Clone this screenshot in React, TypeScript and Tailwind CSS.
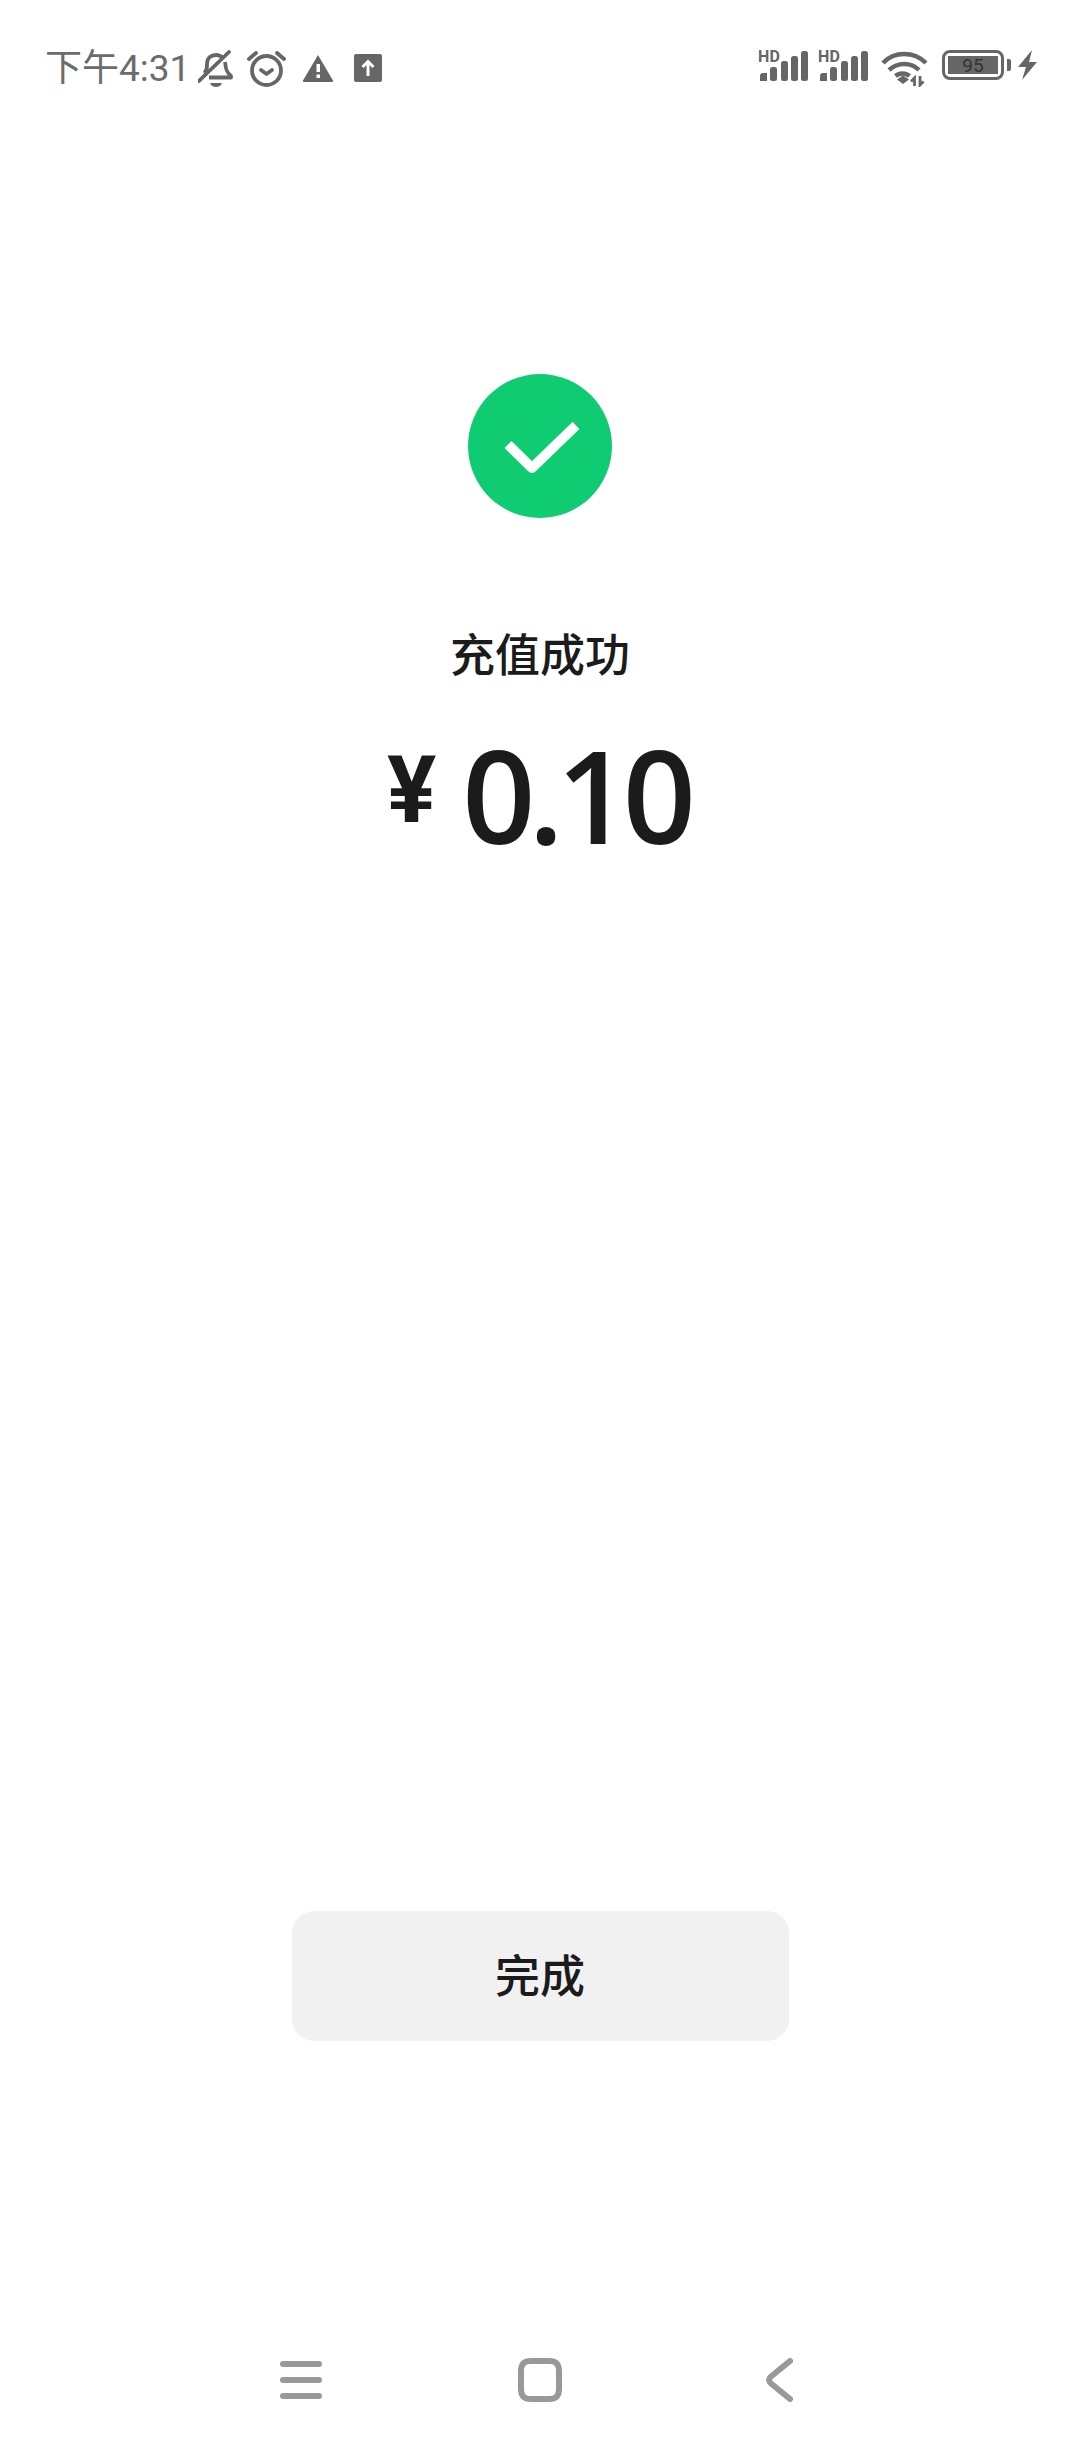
const cjk = "font-['Roboto','Noto_Sans_CJK_SC',sans-serif]";

function Signal() {
  return (
    <svg className="overflow-visible" width="50" height="32" viewBox="0 0 50 32" fill="#666">
      <text x="0" y="11.500" fontFamily="Roboto, sans-serif" fontWeight="700" fontSize="16" letterSpacing="0.2">HD</text>
      <path d="M2 31v-5a3 3 0 0 1 3-3h4v8z" />
      <rect x="12" y="17" width="7" height="14" rx="2.500" />
      <rect x="23" y="11" width="7" height="20" rx="2.500" />
      <rect x="33" y="6" width="7" height="25" rx="2.500" />
      <rect x="43" y="1" width="7" height="30" rx="2.500" />
    </svg>
  );
}

function StatusBar() {
  return (
    <div className="flex h-[100px] items-start justify-between pl-[45px] pr-[43px] pt-[50px] text-[#666]">
      <div className="flex items-start">
        <span className={`${cjk} -mt-[1px] w-[153px] text-[37px] leading-[40px] text-[#6b6b6b]`}>下午4:31</span>
        {/* bell with slash */}
        <svg width="35" height="37" viewBox="0 0 35 37" fill="none" stroke="#666" strokeWidth="3.800">
          <path d="M6 23c3-2 3-5 3-9 0-6 4-9 9-9 3 0 5 1 7 3M27 12c1 5 0 9 6 14v1.500H11" strokeLinejoin="round" />
          <path d="M1 31 31 2" strokeLinecap="round" />
          <path d="M12 33h12c-1 2.500-3 4-6 4s-5-1.500-6-4z" fill="#666" stroke="none" />
        </svg>
        <svg className="ml-[14px]" width="39" height="37" viewBox="0 0 39 37" fill="none" stroke="#666" strokeWidth="3.800" strokeLinecap="round" strokeLinejoin="round">
          <circle cx="19.500" cy="20.500" r="14.500" />
          <path d="M14 20l5.500 4 5.500-4" />
          <path d="M2 9l7-6M37 9l-7-6" />
        </svg>
        <svg className="ml-[16px] mt-[4px]" width="32" height="28" viewBox="0 0 32 28">
          <path d="M16 1 31 26.500a1 1 0 0 1-1 1.500H2a1 1 0 0 1-1-1.500z" fill="#666" />
          <rect x="14.500" y="10" width="3.500" height="8" fill="#fff" />
          <rect x="14.500" y="20.500" width="3.500" height="3.500" fill="#fff" />
        </svg>
        <svg className="ml-[20px] mt-[4px]" width="28" height="28" viewBox="0 0 28 28">
          <rect width="28" height="28" rx="2" fill="#666" />
          <path d="M14 22V8M8.500 13 14 7.500l5.500 5.500" fill="none" stroke="#fff" strokeWidth="3" />
        </svg>
      </div>
      <div className="flex items-start">
        <Signal />
        <div className="ml-[10px]"><Signal /></div>
        <svg className="ml-[13px]" width="47" height="37" viewBox="0 0 47 37" fill="none" stroke="#666" strokeWidth="4.500">
          <path d="M2 13C13 1 33 1 45 13" />
          <path d="M8 20c9-8 22-8 30 0" />
          <path d="M14.500 26c4-3.500 10-3.500 14 0" />
          <path d="M16 29.500l6-4 6 4-6 4.500z" fill="#666" stroke="none" />
          <path d="M33.500 36v-8l-3.500 3.500M39 26v9l3.500-3.500" strokeWidth="2.800" />
        </svg>
        <div className="ml-[14px] flex items-center">
          <div className="flex h-[30px] w-[62px] items-center rounded-[8px] border-[3px] border-[#666] p-[3px]">
            <div className={`flex h-full w-full items-center justify-center bg-[#666] text-[19px] leading-none text-[#333] ${cjk}`}>95</div>
          </div>
          <div className="ml-[3px] h-[12px] w-[4px] rounded-r-[2px] bg-[#666]" />
        </div>
        <svg className="ml-[7px]" width="19" height="30" viewBox="0 0 19 30" fill="#666">
          <path d="M14 0 0 17h8L4 30l15-18h-8z" />
        </svg>
      </div>
    </div>
  );
}

function NavBar() {
  return (
    <div className="mt-[317px] flex items-center pl-[280px]">
      <svg width="42" height="38" viewBox="0 0 42 38" stroke="#999" strokeWidth="6" strokeLinecap="round">
        <path d="M3 3h36M3 19h36M3 35h36" />
      </svg>
      <svg className="ml-[196px]" width="44" height="44" viewBox="0 0 44 44" fill="none" stroke="#999" strokeWidth="6">
        <path d="M13 3h18C38 3 41 6 41 13v18c0 7-3 10-10 10H13C6 41 3 38 3 31V13C3 6 6 3 13 3z" />
      </svg>
      <svg className="ml-[204px]" width="27" height="44" viewBox="0 0 27 44" fill="none" stroke="#999" strokeWidth="6" strokeLinecap="round" strokeLinejoin="round">
        <path d="M24 3 5 18.500c-2.500 2-2.500 5 0 7L24 41" />
      </svg>
    </div>
  );
}

export default function App() {
  return (
    <div className="h-[2460px] w-[1080px] overflow-hidden bg-white">
      <StatusBar />
      <div className="mt-[274px] flex flex-col items-center">
        <div className="flex h-[144px] w-[144px] items-center justify-center rounded-full bg-[#0fcc72]">
          <svg className="ml-[4px] mt-[6px]" width="76" height="54" viewBox="0 0 76 54" fill="none" stroke="#fff" strokeWidth="10" strokeLinejoin="round">
            <path d="M4 22.500 28 46 72 3.500" />
          </svg>
        </div>
        <h1 className={`${cjk} mt-[109px] text-[45px] leading-[60px] font-medium text-[#1b1b1b]`}>充值成功</h1>
        <div className="mt-[43px] flex h-[130px] items-start pr-[4px] text-[#1b1b1b]">
          <span className="mt-[15px] font-['Roboto',sans-serif] text-[92px] leading-[92px] font-bold">¥</span>
          <span className="ml-[26px] font-['Open_Sans',sans-serif] text-[128px] leading-[130px] font-semibold tracking-[-7px]">0.10</span>
        </div>
      </div>
      <button className={`${cjk} mx-auto mt-[1051px] block h-[130px] w-[497px] rounded-[22px] bg-[#f1f1f1] pt-[3px] text-[45px] font-medium text-[#1b1b1b]`}>
        完成
      </button>
      <NavBar />
    </div>
  );
}
